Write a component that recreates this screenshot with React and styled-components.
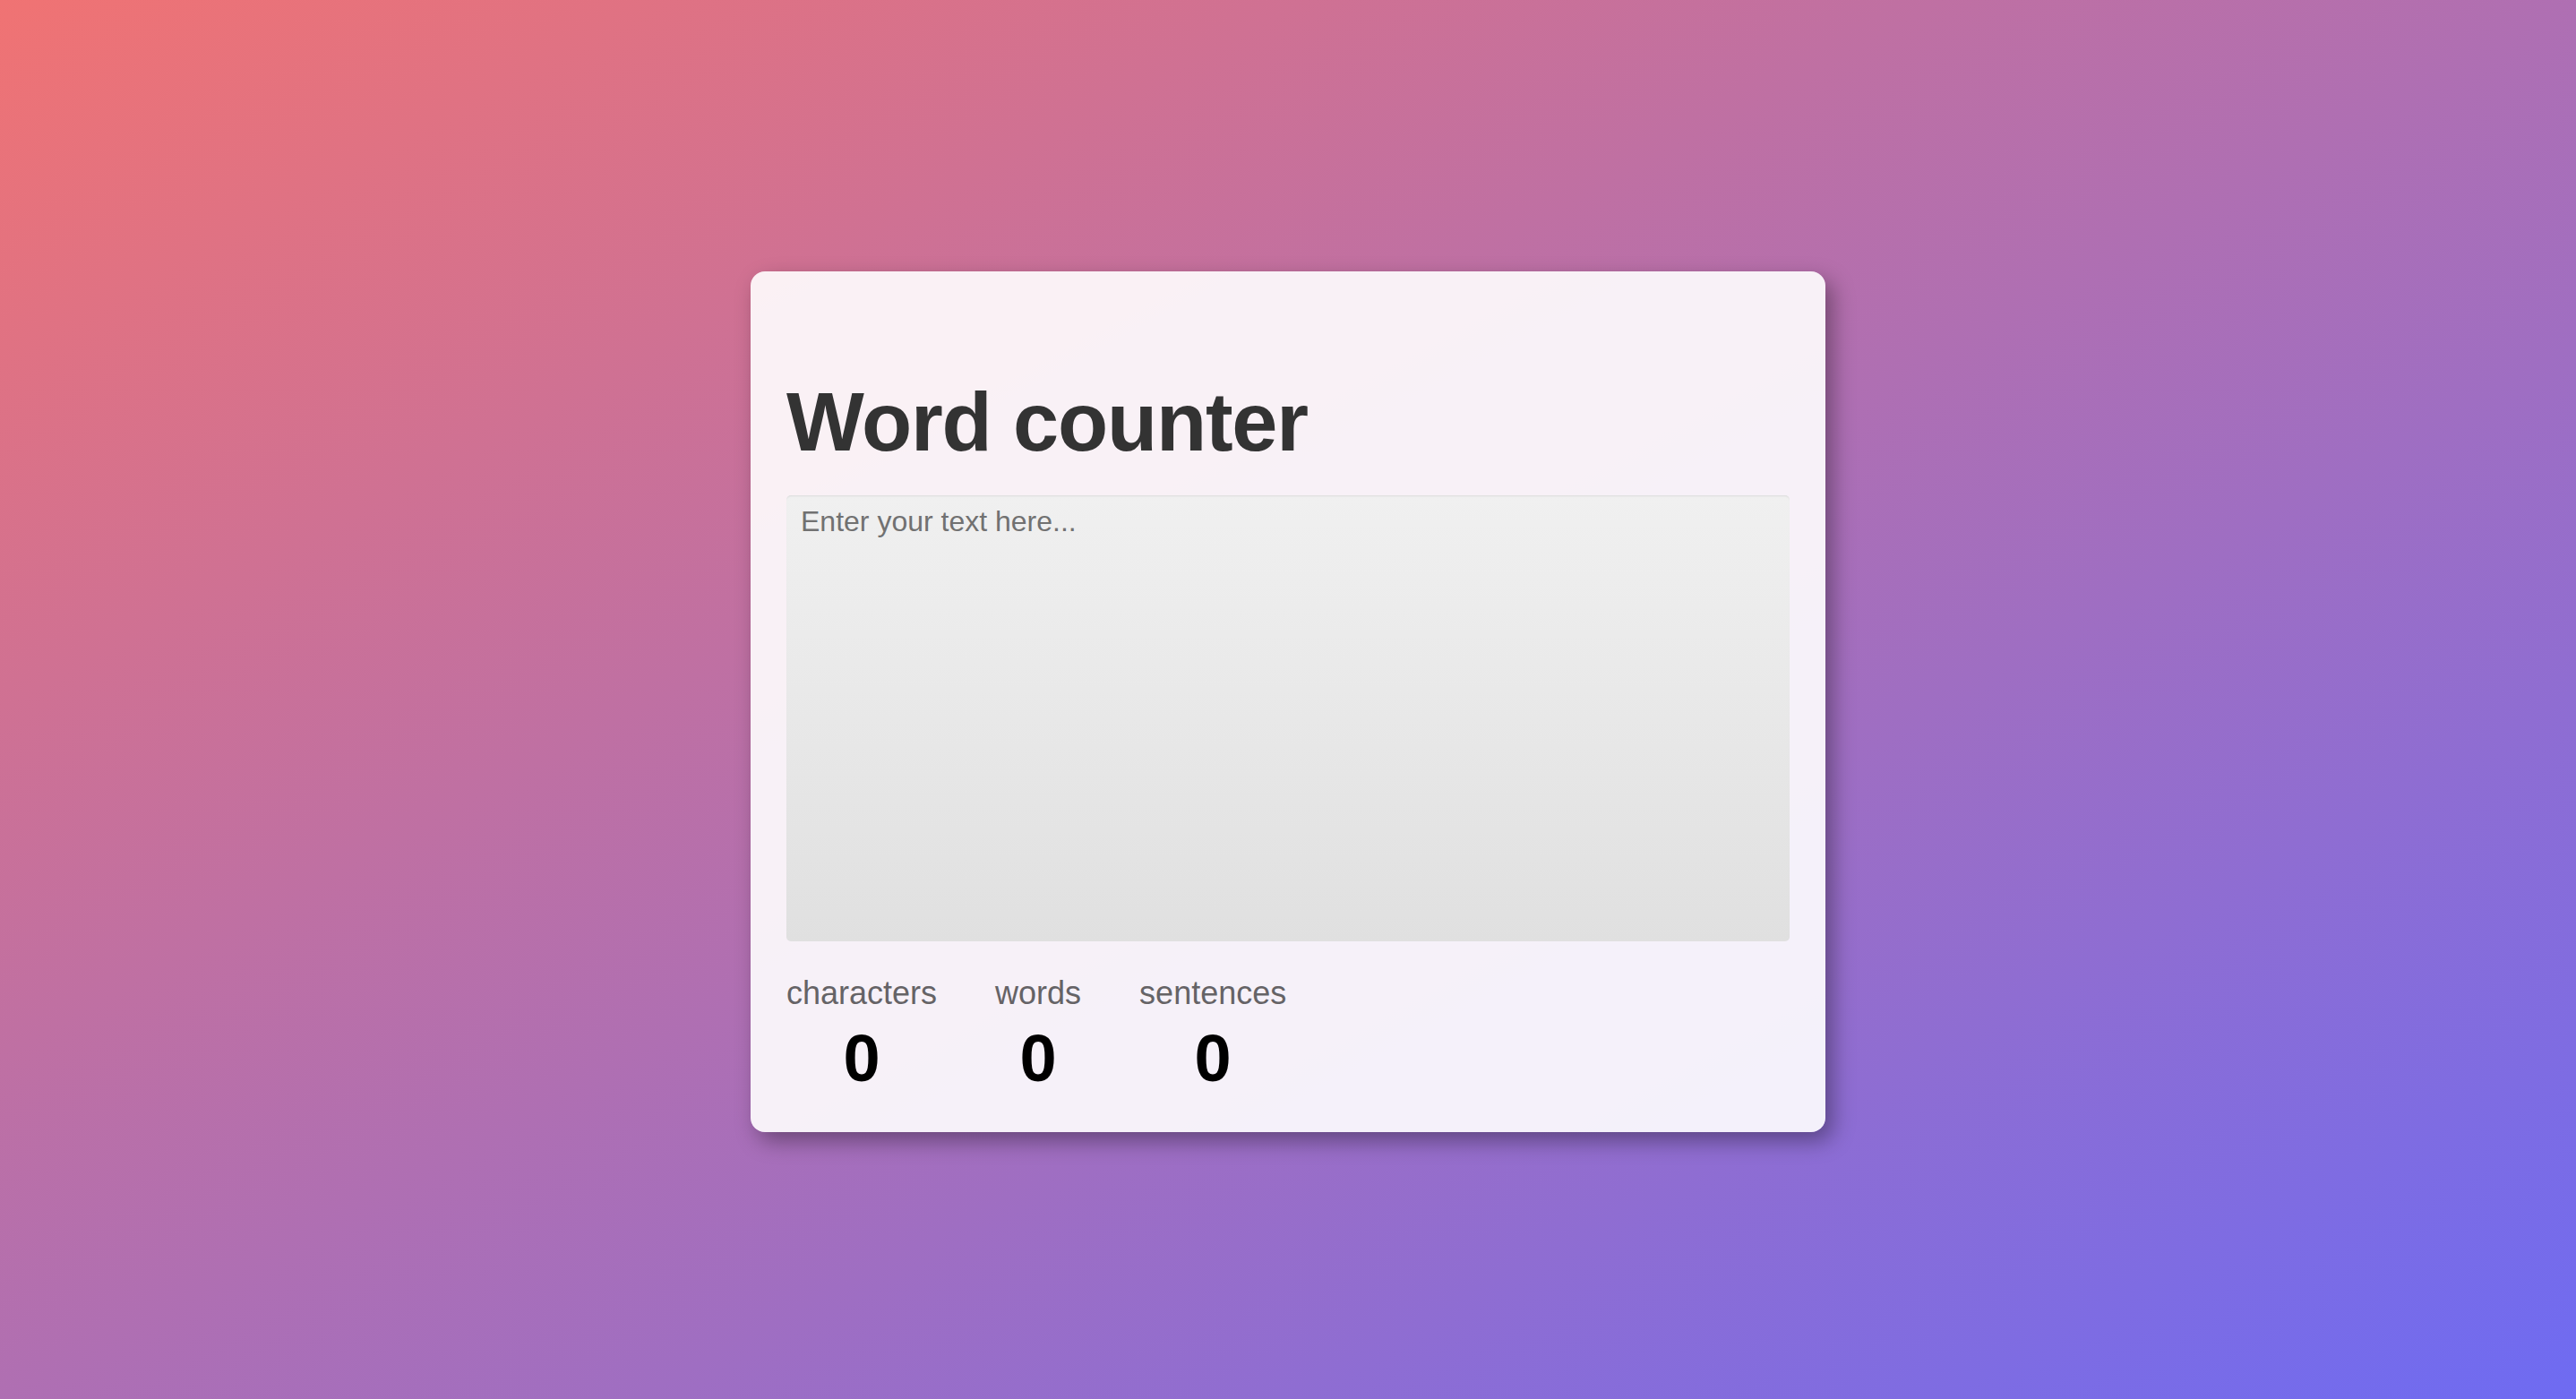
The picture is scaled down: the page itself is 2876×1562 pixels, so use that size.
import React, { useState } from "react";
import styled, { createGlobalStyle } from "styled-components";

const GlobalStyle = createGlobalStyle`
  html, body {
    margin: 0;
    padding: 0;
  }
  body {
    min-height: 100vh;
    font-family: "Liberation Sans", Helvetica, Arial, sans-serif;
    background: linear-gradient(to bottom right, #f07373, #6e6bf2);
    background-attachment: fixed;
  }
`;

const Page = styled.main`
  min-height: 100vh;
  display: flex;
  align-items: center;
  justify-content: center;
  box-sizing: border-box;
  padding-top: 4px;
`;

const Card = styled.section`
  box-sizing: border-box;
  width: 1200px;
  padding: 40px;
  border-radius: 16px;
  background: rgba(255, 255, 255, 0.9);
  box-shadow: 8px 10px 24px rgba(0, 0, 0, 0.36);
  display: flex;
  flex-direction: column;
`;

const Title = styled.h1`
  margin: 82px 0 36px;
  font-size: 92px;
  line-height: 92px;
  font-weight: 700;
  letter-spacing: -1.2px;
  color: #333;
`;

const TextArea = styled.textarea`
  box-sizing: border-box;
  width: 100%;
  height: 498px;
  margin: 0;
  padding: 11px 16px;
  border: none;
  border-radius: 5px;
  resize: none;
  outline: none;
  font-family: "Liberation Sans", Helvetica, Arial, sans-serif;
  font-size: 32px;
  color: #333;
  background: linear-gradient(to bottom, #f0f0f0, #e0e0e0);
  box-shadow: inset 0 2px 2px -1px rgba(0, 0, 0, 0.09);
  display: block;

  &::placeholder {
    color: #717171;
    opacity: 1;
  }
`;

const Stats = styled.div`
  display: flex;
  gap: 65px;
  margin-top: 37px;
`;

const Stat = styled.div`
  display: flex;
  flex-direction: column;
  align-items: center;
  gap: 9px;
`;

const Label = styled.span`
  font-size: 36px;
  color: #656366;
`;

const Value = styled.span`
  font-size: 74px;
  font-weight: 700;
  color: #000;
`;

export default function App() {
  const [text, setText] = useState("");
  const trimmed = text.trim();
  const words = trimmed ? trimmed.split(/\s+/).length : 0;
  const sentences = trimmed
    ? trimmed.split(/[.!?]+/).filter((s) => s.trim().length > 0).length
    : 0;

  const stats = [
    { label: "characters", value: text.length },
    { label: "words", value: words },
    { label: "sentences", value: sentences },
  ];

  return (
    <>
      <GlobalStyle />
      <Page>
        <Card>
          <Title>Word counter</Title>
          <TextArea
            placeholder="Enter your text here..."
            value={text}
            onChange={(e) => setText(e.target.value)}
          />
          <Stats>
            {stats.map((s) => (
              <Stat key={s.label}>
                <Label>{s.label}</Label>
                <Value>{s.value}</Value>
              </Stat>
            ))}
          </Stats>
        </Card>
      </Page>
    </>
  );
}
